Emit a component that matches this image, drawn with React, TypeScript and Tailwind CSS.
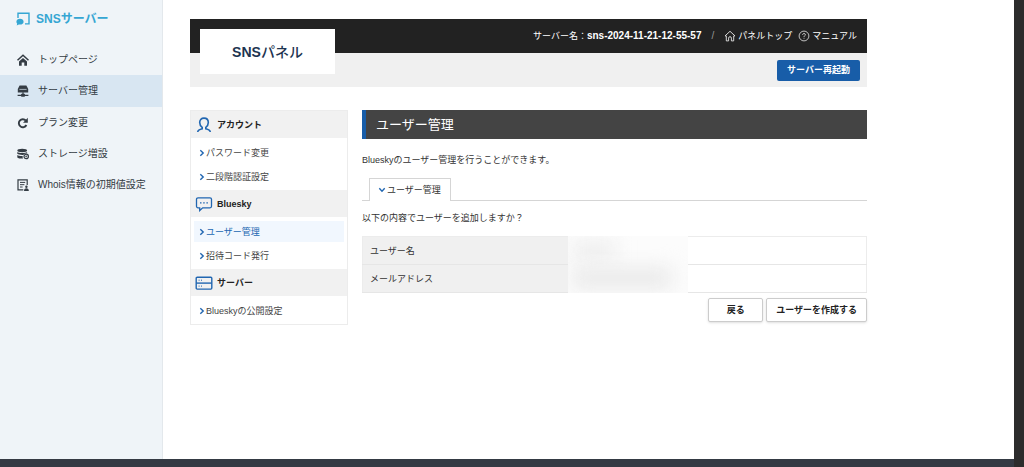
import type { ReactNode } from 'react';

function LogoIcon() {
  return (
    <svg viewBox="0 0 14 14" className="size-3.5 shrink-0" aria-hidden="true">
      <path d="M2 6V1.3h11v10.6H9" fill="none" stroke="#35a6d3" strokeWidth="1.4" />
      <path d="M4 6.8c2.100 0 3.600 1.200 3.600 2.900S6.100 12.600 4 12.600c-.4 0-.8 0-1.200-.1L.7 13.500l.5-1.800C.6 11.200.4 10.500.4 9.700.4 8 1.900 6.800 4 6.800z" fill="#35a6d3" />
    </svg>
  );
}

function HomeIcon() {
  return (
    <svg viewBox="0 0 12 12" className="size-3 shrink-0" aria-hidden="true">
      <path d="M.5 6.200 6 1.200l5.500 5" fill="none" stroke="#343c44" strokeWidth="1.5" />
      <path d="M2 7.500 6 3.900l4 3.600v4.200H7.300V8.500H4.700v3.200H2z" fill="#343c44" />
    </svg>
  );
}

function ServerIcon() {
  return (
    <svg viewBox="0 0 12 12" className="size-3 shrink-0" aria-hidden="true">
      <path d="M2.600.4h6.800L11.200 4v3.600H.8V4z" fill="#343c44" />
      <path d="M2.400 4.400h7.200" stroke="#d8e6f2" strokeWidth=".7" />
      <path d="M6 7.300v3M.6 10.300h10.800" stroke="#343c44" strokeWidth="1.2" />
      <rect x="4" y="8.800" width="4" height="3" rx=".8" fill="#343c44" />
    </svg>
  );
}

function RotateIcon() {
  return (
    <svg viewBox="0 0 12 12" className="size-3 shrink-0" aria-hidden="true">
      <path d="M8.800 3.500A4 4 0 1 0 9.400 8" fill="none" stroke="#343c44" strokeWidth="1.9" />
      <path d="M10.800.8v5H6z" fill="#343c44" />
    </svg>
  );
}

function StorageIcon() {
  return (
    <svg viewBox="0 0 12 12" className="size-3 shrink-0" aria-hidden="true">
      <ellipse cx="5.200" cy="2.500" rx="4.900" ry="1.700" fill="#343c44" />
      <path d="M.3 3.900c1.700 1.300 8.100 1.300 9.800 0v1.300c-1.800.1-3 .7-3.700 1.700C3.500 7 1.200 6.600.3 5.800zM.3 7c1 .8 3 1.200 5.400 1.100-.2.8-.1 1.700.3 2.500C3.500 10.700 1.200 10.300.3 9.400z" fill="#343c44" />
      <circle cx="9.200" cy="8.400" r="2.200" fill="none" stroke="#343c44" strokeWidth="1.200" />
      <path d="M8.200 8.400h2M9.200 7.400v2" stroke="#343c44" strokeWidth=".7" />
    </svg>
  );
}

function WhoisIcon() {
  return (
    <svg viewBox="0 0 12 12" className="size-3 shrink-0" aria-hidden="true">
      <path d="M6.300 10.900H1V.9h9.200v5" fill="none" stroke="#343c44" strokeWidth="1.200" />
      <path d="M3 3.400h5.200M3 5.700h4.400M3 8h2.600" stroke="#343c44" strokeWidth="1" />
      <circle cx="9.400" cy="7.700" r="1.200" fill="#343c44" />
      <path d="M7 12c0-1.800.9-2.700 2.400-2.700s2.400.9 2.400 2.700z" fill="#343c44" />
    </svg>
  );
}

function AccountIcon() {
  return (
    <svg viewBox="0 0 18 16" className="h-4 w-[18px] shrink-0" fill="none" stroke="#2166b1" strokeWidth="1.6" aria-hidden="true">
      <path d="M2.700 15c.3-1.900 1.600-2.500 4.500-3.200v-1.400C5.600 9.300 4.700 7.500 4.700 5.600c0-3 1.700-4.500 4.300-4.500s4.300 1.500 4.300 4.500c0 1.900-.9 3.700-2.500 4.800v1.400c2.900.7 4.200 1.300 4.500 3.200" />
    </svg>
  );
}

function ChatIcon() {
  return (
    <svg viewBox="0 0 18 16" className="h-4 w-[18px] shrink-0" fill="none" stroke="#2166b1" strokeWidth="1.3" aria-hidden="true">
      <path d="M3 1.800h12a1.500 1.500 0 0 1 1.500 1.500v7a1.500 1.500 0 0 1-1.500 1.500H7.700L4.700 14.600v-2.800H3a1.500 1.500 0 0 1-1.500-1.500v-7A1.500 1.500 0 0 1 3 1.800z" />
      <path d="M5 6.800h1.500M8.200 6.800h1.500M11.400 6.800h1.500" />
    </svg>
  );
}

function RackIcon() {
  return (
    <svg viewBox="0 0 18 16" className="h-4 w-[18px] shrink-0" fill="none" stroke="#2166b1" strokeWidth="1.4" aria-hidden="true">
      <rect x="1.200" y="2.200" width="15.600" height="11.900" rx="1" />
      <path d="M1.200 8.100h15.600" />
      <path d="M3.600 5.200h1M6 5.200h1M3.600 11.100h1M6 11.100h1" strokeWidth="1" />
    </svg>
  );
}

function PanelTopIcon() {
  return (
    <svg viewBox="0 0 12 12" className="size-3 shrink-0" fill="none" stroke="#e6e6e6" strokeWidth=".9" strokeLinejoin="round" aria-hidden="true">
      <path d="M2.300 5.900H1L6 1.300l5 4.600H9.700v5H7.400V8.100a1.400 1.400 0 0 0-2.800 0v2.800H2.300z" />
    </svg>
  );
}

function HelpIcon() {
  return (
    <svg viewBox="0 0 12 12" className="size-3 shrink-0" fill="none" stroke="#e6e6e6" strokeWidth=".8" aria-hidden="true">
      <circle cx="6" cy="6" r="4.900" />
      <path d="M4.600 5c0-1 .6-1.500 1.400-1.500s1.400.5 1.400 1.200C7.400 5.700 6 5.700 6 7M6 7.800v.9" />
    </svg>
  );
}

function Chevron({ down = false }: { down?: boolean }) {
  return (
    <svg viewBox="0 0 6 8" className={down ? 'h-2 w-1.5 shrink-0 rotate-90' : 'h-2 w-1.5 shrink-0'} fill="none" stroke="#2166b1" strokeWidth="1.4" aria-hidden="true">
      <path d="M1.300 1.300 4.200 4 1.300 6.700" />
    </svg>
  );
}

const navItems = [
  { label: 'トップページ', icon: <HomeIcon /> },
  { label: 'サーバー管理', icon: <ServerIcon />, active: true },
  { label: 'プラン変更', icon: <RotateIcon /> },
  { label: 'ストレージ増設', icon: <StorageIcon /> },
  { label: 'Whois情報の初期値設定', icon: <WhoisIcon /> },
];

type Section = { title: string; icon: ReactNode; items: { label: string; active?: boolean }[] };

const sections: Section[] = [
  { title: 'アカウント', icon: <AccountIcon />, items: [{ label: 'パスワード変更' }, { label: '二段階認証設定' }] },
  { title: 'Bluesky', icon: <ChatIcon />, items: [{ label: 'ユーザー管理', active: true }, { label: '招待コード発行' }] },
  { title: 'サーバー', icon: <RackIcon />, items: [{ label: 'Blueskyの公開設定' }] },
];

function Sidebar() {
  return (
    <aside className="w-[163px] shrink-0 border-r border-[#e3e8ec] bg-[#eff4f8]">
      <a href="#" className="flex h-11 items-center gap-1.5 pb-[7px] pl-4 text-[12px] font-bold text-[#35a6d3]">
        <LogoIcon />
        SNSサーバー
      </a>
      <nav className="flex h-[157px] flex-col">
        {navItems.map((item) => (
          <a
            key={item.label}
            href="#"
            className={`flex flex-1 items-center gap-[9px] pl-[17px] text-[10px] text-[#343c44] ${item.active ? 'bg-[#d8e6f2]' : ''}`}
          >
            {item.icon}
            {item.label}
          </a>
        ))}
      </nav>
    </aside>
  );
}

function PanelHeader() {
  return (
    <header className="relative">
      <div className="flex h-[34px] items-center justify-end bg-[#222] pr-2.5 text-white">
        <span>サーバー名：</span>
        <strong className="text-[10px]">sns-2024-11-21-12-55-57</strong>
        <span className="px-2.5 text-[10px] text-[#999]">/</span>
        <a href="#" className="mr-1.5 flex items-center gap-0.5">
          <PanelTopIcon />
          パネルトップ
        </a>
        <a href="#" className="flex items-center gap-0.5">
          <HelpIcon />
          マニュアル
        </a>
      </div>
      <div className="flex h-[34px] items-center justify-end bg-[#f0f0f0] pr-[7px]">
        <button type="button" className="h-[21px] rounded-xs bg-[#185da8] px-2.5 font-bold text-white">
          サーバー再起動
        </button>
      </div>
      <a href="#" className="absolute top-2.5 left-2.5 flex h-[45px] w-[135px] items-center justify-center bg-white text-[14px] font-medium text-[#1d3450]">
        <span className="font-bold">SNS</span>パネル
      </a>
    </header>
  );
}

function SideMenu() {
  return (
    <nav className="w-[158px] shrink-0 self-start border border-[#ececec]">
      {sections.map((section) => (
        <section key={section.title}>
          <h2 className="flex h-[27px] items-center gap-1 bg-[#f1f1f1] pl-1 font-bold text-[#222]">
            {section.icon}
            {section.title}
          </h2>
          <ul className="flex flex-col gap-[3px] px-[3px] pt-1 pb-[3px]">
            {section.items.map((item) => (
              <li key={item.label}>
                <a
                  href="#"
                  className={`flex h-[21px] items-center gap-px pl-[5px] ${item.active ? 'bg-[#f1f7fe] text-[#2166b1]' : 'text-[#444]'}`}
                >
                  <Chevron />
                  {item.label}
                </a>
              </li>
            ))}
          </ul>
        </section>
      ))}
    </nav>
  );
}

function Confirmation() {
  return (
    <main className="min-w-0 flex-1">
      <h1 className="flex h-[29px] items-center border-l-4 border-[#185da8] bg-[#444] pl-2.5 text-[13px] text-white">
        ユーザー管理
      </h1>
      <p className="mt-[15px] leading-3">Blueskyのユーザー管理を行うことができます。</p>
      <div className="mt-3 flex border-b border-[#d5d5d5] pl-[7px]">
        <a href="#" className="-mb-px flex h-[23px] items-center gap-0.5 border border-b-0 border-[#d5d5d5] bg-white px-[9px]">
          <Chevron down />
          ユーザー管理
        </a>
      </div>
      <p className="mt-[11px] leading-3">以下の内容でユーザーを追加しますか？</p>
      <div className="relative mt-3">
        <table className="w-full border-collapse border border-[#ececec]">
          <tbody>
            {['ユーザー名', 'メールアドレス'].map((label) => (
              <tr key={label} className="h-7 border-b border-[#e6e6e6]">
                <th scope="row" className="w-[206px] bg-[#f0f0f0] px-[7px] text-left font-normal">
                  {label}
                </th>
                <td />
              </tr>
            ))}
          </tbody>
        </table>
        <div className="absolute inset-y-0 left-[206px] w-[120px] overflow-hidden bg-[#fcfcfc]">
          <div className="absolute top-1 left-1 h-5 w-11 bg-[#efefef] blur-[9px]" />
          <div className="absolute top-8 left-1 h-5 w-[100px] bg-[#e8e8e8] blur-[10px]" />
        </div>
      </div>
      <div className="mt-[5px] flex justify-end gap-[3px]">
        <button type="button" className="h-6 w-[55px] rounded-xs border border-[#ccc] bg-white font-bold text-[#222] shadow-sm">
          戻る
        </button>
        <button type="button" className="h-6 rounded-xs border border-[#ccc] bg-white px-[9px] font-bold text-[#222] shadow-sm">
          ユーザーを作成する
        </button>
      </div>
    </main>
  );
}

export default function App() {
  return (
    <div
      lang="ja"
      className="flex min-h-screen bg-[#2c2c2c] pr-2.5 font-['Liberation_Sans','Noto_Sans_CJK_JP',sans-serif] text-[9px] leading-[14px] text-[#333]"
    >
      <div className="flex min-w-0 flex-1 flex-col bg-white">
        <div className="flex flex-1">
          <Sidebar />
          <div className="min-w-0 flex-1 pt-[19px] pr-[147px] pb-6 pl-[27px]">
            <PanelHeader />
            <div className="mt-[23px] flex gap-3.5">
              <SideMenu />
              <Confirmation />
            </div>
          </div>
        </div>
        <footer className="h-2 bg-[#343a43]" />
      </div>
    </div>
  );
}
